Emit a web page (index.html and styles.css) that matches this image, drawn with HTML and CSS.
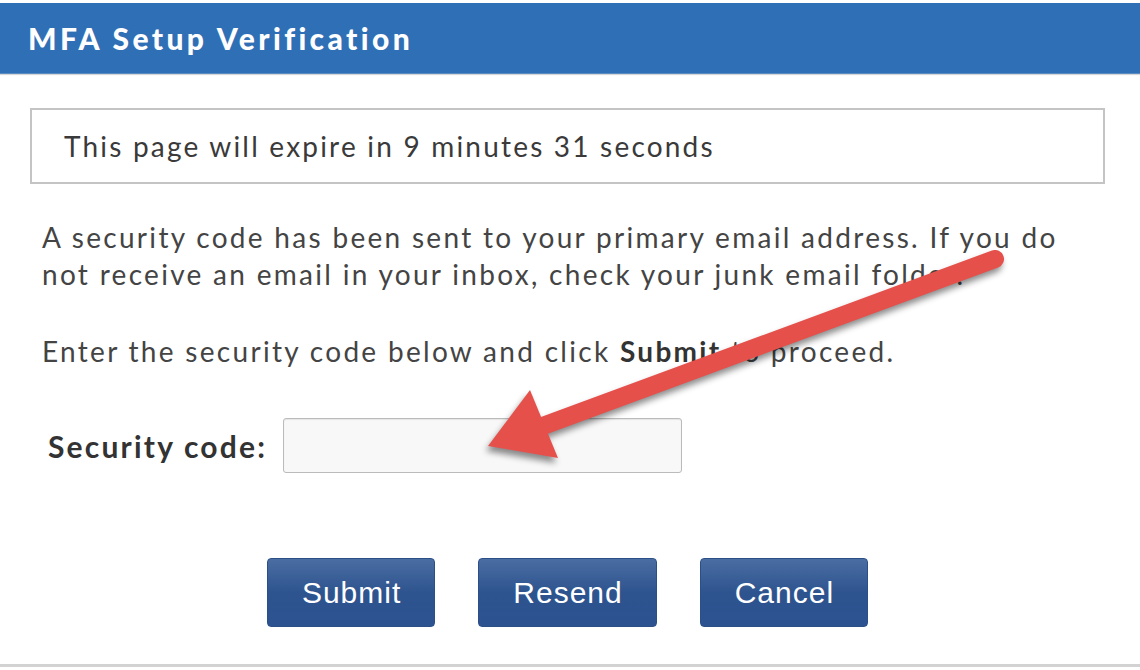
FILE: index.html
```html
<!DOCTYPE html>
<html>
<head>
<meta charset="utf-8">
<link rel="stylesheet" href="styles.css">
</head>
<body>
<div class="dialog">
  <div class="header"><h1 class="title">MFA Setup Verification</h1></div>
  <div class="content">
    <div class="expire">This page will expire in 9 minutes 31 seconds</div>
    <p class="msg">A security code has been sent to your primary email address. If you do not receive an email in your inbox, check your junk email folder.</p>
    <p class="msg enter">Enter the security code below and click <b>Submit</b> to proceed.</p>
    <div class="field">
      <label class="label" for="code">Security code:</label>
      <input class="input" id="code" type="text">
    </div>
    <div class="buttons">
      <button class="btn">Submit</button>
      <button class="btn">Resend</button>
      <button class="btn">Cancel</button>
    </div>
  </div>
  <svg class="arrow" width="1140" height="670" viewBox="0 0 1140 670">
    <line x1="995" y1="259" x2="540" y2="427" stroke="#e5504b" stroke-width="18" stroke-linecap="round"/>
    <polygon points="488,446 530,390 558,458" fill="#e5504b"/>
  </svg>
</div>
</body>
</html>
```
FILE: styles.css
```css
html, body {
  margin: 0;
  padding: 0;
  background: #fff;
}
body {
  width: 1140px;
  height: 670px;
  overflow: hidden;
  font-family: Lato, "Liberation Sans", sans-serif;
}
.dialog {
  position: relative;
  height: 667px;
  padding-top: 3px;
  box-sizing: border-box;
  border-bottom: 3px solid #d2d2d2;
}
.header {
  background: #2f6fb5;
  height: 70px;
  display: flex;
  align-items: center;
  padding-left: 28px;
  box-shadow: 0 1px 0 #5a8cc4, 0 2px 1px #d8d8d8;
}
.title {
  margin: 0;
  color: #fff;
  font-size: 30px;
  font-weight: 900;
  letter-spacing: 3.4px;
}
.content {
  padding: 35px 35px 0 30px;
}
.expire {
  border: 2px solid #c4c4c4;
  height: 76px;
  box-sizing: border-box;
  display: flex;
  align-items: center;
  padding-left: 32px;
  font-size: 28px;
  color: #3a3a3a;
  letter-spacing: 2.2px;
}
.msg {
  margin: 35px 0 0 12px;
  font-size: 28px;
  line-height: 37px;
  color: #444;
  letter-spacing: 2.3px;
}
.enter {
  margin-top: 40px;
}
.enter b {
  color: #333;
}
.field {
  display: flex;
  align-items: center;
  margin-top: 48px;
  margin-left: 18px;
}
.label {
  font-size: 30px;
  font-weight: 700;
  color: #333;
  letter-spacing: 2.2px;
  margin-right: 16px;
}
.input {
  width: 399px;
  height: 55px;
  box-sizing: border-box;
  border: 1px solid #bbb;
  border-radius: 3px;
  background: #f8f8f8;
  box-shadow: inset 0 1px 1px rgba(0,0,0,0.08);
}
.buttons {
  display: flex;
  justify-content: center;
  gap: 43px;
  margin-top: 85px;
}
.btn {
  height: 69px;
  padding: 0 33px 0 34px;
  border: 1px solid #2b4f87;
  border-radius: 4px;
  background: linear-gradient(#4a6da2, #2e548f 50%, #2c5290);
  color: #fff;
  font-family: "Liberation Sans", Arial, sans-serif;
  font-size: 30px;
  letter-spacing: 1px;
}
.arrow {
  position: absolute;
  left: 0;
  top: 0;
  pointer-events: none;
  filter: drop-shadow(-2px 5px 3px rgba(0,0,0,0.45));
}
```
